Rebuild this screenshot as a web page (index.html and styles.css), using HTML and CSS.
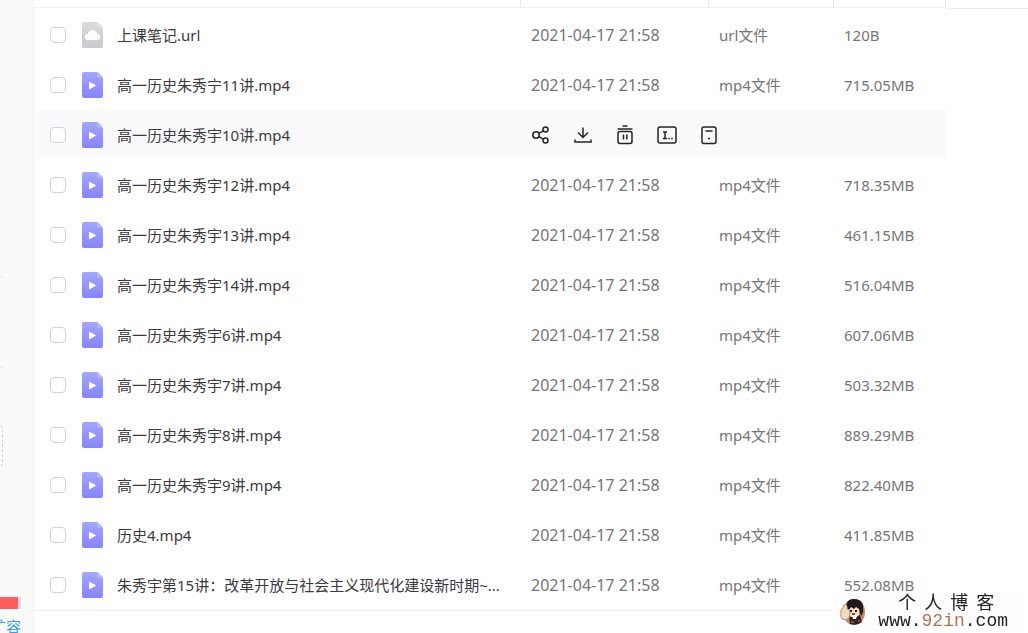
FILE: index.html
```
<!DOCTYPE html>
<html lang="zh-CN">
<head>
  <meta charset="utf-8">
  <title>文件列表</title>
  <link rel="stylesheet" href="styles.css">
</head>
<body>
  <svg class="defs" aria-hidden="true">
    <linearGradient id="violet" x1="0" y1="0" x2="0" y2="1">
      <stop offset="0" stop-color="#a3a6fd"/><stop offset="1" stop-color="#8585fc"/>
    </linearGradient>
    <linearGradient id="grey" x1="0" y1="0" x2="0" y2="1">
      <stop offset="0" stop-color="#dadbdf"/><stop offset="1" stop-color="#c9cacd"/>
    </linearGradient>
    <symbol id="video" viewBox="0 0 21 26">
      <path fill="url(#violet)" d="M2 0h12q1.500 0 2.500 1l3.500 3.500q1 1 1 2.500v17a2 2 0 0 1-2 2H2a2 2 0 0 1-2-2V2a2 2 0 0 1 2-2z"/>
      <path fill="#b4b6fe" d="M15 .3l5.500 5.500h-4a1.500 1.500 0 0 1-1.500-1.500z"/>
      <path fill="#fff" d="M7 10.500q0-1 1-.5l5.500 3q.8.500 0 1l-5.500 3q-1 .5-1-.5z"/>
    </symbol>
    <symbol id="cloud" viewBox="0 0 21 26">
      <path fill="url(#grey)" d="M2 0h12q1.500 0 2.500 1l3.500 3.500q1 1 1 2.500v17a2 2 0 0 1-2 2H2a2 2 0 0 1-2-2V2a2 2 0 0 1 2-2z"/>
      <path fill="#e1e2e6" d="M15 .3l5.500 5.500h-4a1.500 1.500 0 0 1-1.500-1.500z"/>
      <path fill="#fff" d="M6 18a3 3 0 0 1-.2-6 4.800 4.800 0 0 1 9.400 0 3 3 0 0 1-.2 6z"/>
    </symbol>
  </svg>

  <div class="app">
    <aside class="sidebar">
      <div class="rule"></div>
      <div class="rule"></div>
      <div class="dropbox"></div>
      <div class="quota"><div class="used"></div></div>
      <a class="expand" href="#">扩容</a>
    </aside>

    <main class="content">
      <table class="files">
        <colgroup><col><col class="c-time"><col class="c-type"><col class="c-size"></colgroup>
        <thead>
          <tr><th></th><th></th><th></th><th></th></tr>
        </thead>
        <tbody>
          <tr>
            <td><label class="name"><input type="checkbox"><svg class="icon"><use href="#cloud"/></svg><span>上课笔记.url</span></label></td>
            <td class="time">2021-04-17 21:58</td><td>url文件</td><td>120B</td>
          </tr>
          <tr>
            <td><label class="name"><input type="checkbox"><svg class="icon"><use href="#video"/></svg><span>高一历史朱秀宁11讲.mp4</span></label></td>
            <td class="time">2021-04-17 21:58</td><td>mp4文件</td><td>715.05MB</td>
          </tr>
          <tr class="active">
            <td><label class="name"><input type="checkbox"><svg class="icon"><use href="#video"/></svg><span>高一历史朱秀宇10讲.mp4</span></label></td>
            <td colspan="3">
              <div class="actions">
                <button type="button" aria-label="分享"><svg viewBox="0 0 20 20"><circle cx="5" cy="10" r="3.200"/><circle cx="14.500" cy="4.500" r="2.500"/><circle cx="14.500" cy="15.500" r="2.500"/><path d="M7.800 8.400l4.500-2.600M7.800 11.600l4.500 2.600"/></svg></button>
                <button type="button" aria-label="下载"><svg viewBox="0 0 20 20"><path d="M10 2.500v9.500M5 7.500l5 5 5-5M2 14.500v2.500h16v-2.500"/></svg></button>
                <button type="button" aria-label="删除"><svg viewBox="0 0 20 20"><path d="M7.500 1h5M2.500 4h15M8.500 9.500v5M11.800 9.500v5"/><rect x="3" y="6.500" width="14" height="12" rx="2"/></svg></button>
                <button type="button" aria-label="重命名"><svg viewBox="0 0 20 20"><rect x="1" y="2" width="18" height="16" rx="2"/><path d="M6 7h4M8 7v6.500M6 13.500h4M11.300 13.500h1.500M14.200 13.500h1.500"/></svg></button>
                <button type="button" aria-label="更多"><svg viewBox="0 0 20 20"><rect x="3" y="2" width="14" height="16.500" rx="2"/><path d="M6.500 6h7M9 13.500h2"/></svg></button>
              </div>
            </td>
          </tr>
          <tr>
            <td><label class="name"><input type="checkbox"><svg class="icon"><use href="#video"/></svg><span>高一历史朱秀宇12讲.mp4</span></label></td>
            <td class="time">2021-04-17 21:58</td><td>mp4文件</td><td>718.35MB</td>
          </tr>
          <tr>
            <td><label class="name"><input type="checkbox"><svg class="icon"><use href="#video"/></svg><span>高一历史朱秀宇13讲.mp4</span></label></td>
            <td class="time">2021-04-17 21:58</td><td>mp4文件</td><td>461.15MB</td>
          </tr>
          <tr>
            <td><label class="name"><input type="checkbox"><svg class="icon"><use href="#video"/></svg><span>高一历史朱秀宇14讲.mp4</span></label></td>
            <td class="time">2021-04-17 21:58</td><td>mp4文件</td><td>516.04MB</td>
          </tr>
          <tr>
            <td><label class="name"><input type="checkbox"><svg class="icon"><use href="#video"/></svg><span>高一历史朱秀宇6讲.mp4</span></label></td>
            <td class="time">2021-04-17 21:58</td><td>mp4文件</td><td>607.06MB</td>
          </tr>
          <tr>
            <td><label class="name"><input type="checkbox"><svg class="icon"><use href="#video"/></svg><span>高一历史朱秀宇7讲.mp4</span></label></td>
            <td class="time">2021-04-17 21:58</td><td>mp4文件</td><td>503.32MB</td>
          </tr>
          <tr>
            <td><label class="name"><input type="checkbox"><svg class="icon"><use href="#video"/></svg><span>高一历史朱秀宇8讲.mp4</span></label></td>
            <td class="time">2021-04-17 21:58</td><td>mp4文件</td><td>889.29MB</td>
          </tr>
          <tr>
            <td><label class="name"><input type="checkbox"><svg class="icon"><use href="#video"/></svg><span>高一历史朱秀宇9讲.mp4</span></label></td>
            <td class="time">2021-04-17 21:58</td><td>mp4文件</td><td>822.40MB</td>
          </tr>
          <tr>
            <td><label class="name"><input type="checkbox"><svg class="icon"><use href="#video"/></svg><span>历史4.mp4</span></label></td>
            <td class="time">2021-04-17 21:58</td><td>mp4文件</td><td>411.85MB</td>
          </tr>
          <tr>
            <td><label class="name"><input type="checkbox"><svg class="icon"><use href="#video"/></svg><span>朱秀宇第15讲：改革开放与社会主义现代化建设新时期~...</span></label></td>
            <td class="time">2021-04-17 21:58</td><td>mp4文件</td><td>552.08MB</td>
          </tr>
        </tbody>
      </table>
      <div class="detail"></div>
    </main>
  </div>

  <div class="watermark">
    <svg class="avatar" viewBox="0 0 28 28" aria-hidden="true">
      <ellipse cx="15" cy="14" rx="11" ry="13" fill="#b88b62"/>
      <path fill="#f7dfc4" d="M9 7h11v10q-5 5-11 0z"/>
      <path fill="#1f1b1e" d="M8 10Q6 1 15 1t9 8q1 5-2 9l-2-7-3-2-2 2-3-2-2 3z"/>
      <path fill="#2a2527" d="M10 18q6 3 11-1l2 7q-5 4-12 2z"/>
      <path fill="#fff" d="M13 17h5l-1 4h-3z"/>
      <path fill="#222" d="M11 12h2v2h-2zM16 12h2v2h-2z"/>
      <path fill="#f0dcc2" stroke="#b39474" d="M2 14q-1-3 2-4l1-3q2-1 3 1v3q3 0 3 3l-1 6q-3 3-7 1-2-2-1-7z"/>
      <path stroke="#b33c31" stroke-width="2" d="M13 16h3M12 24h3M19 23h2"/>
    </svg>
    <div class="mark">
      <div class="title"><span>个</span><span>人</span><span>博</span><span>客</span></div>
      <div class="site">www.<b>92in</b>.com</div>
    </div>
  </div>
</body>
</html>
```

FILE: styles.css
```
* {
  box-sizing: border-box;
}
body {
  margin: 0;
  background: #fff;
  color: #424246;
  font: 15px/20px "Noto Sans", "Noto Sans CJK SC", sans-serif;
}
.defs {
  position: absolute;
  width: 0;
  height: 0;
}
.app {
  display: flex;
  min-height: 100vh;
}

/* sidebar */
.sidebar {
  display: flex;
  flex-direction: column;
  align-items: flex-start;
  width: 34px;
  padding-top: 276px;
  background: #f9fafc;
  border-right: 1px solid #f0f1f3;
  overflow: hidden;
}
.rule {
  width: 2px;
  height: 1px;
  margin-bottom: 90px;
  background: #e4e5e8;
}
.dropbox {
  width: 16px;
  height: 42px;
  margin: -33px 0 130px -13px;
  border: 1px dashed #d0d1d5;
  border-radius: 4px;
}
.quota {
  width: 21px;
  height: 12px;
  background: #dcdde1;
}
.used {
  width: 18px;
  height: 12px;
  background: #ff5c5c;
}
.expand {
  height: 16px;
  margin: 7px 0 0 -9px;
  color: #3f9cf0;
  text-decoration: none;
  white-space: nowrap;
}

/* file list */
.content {
  display: flex;
  flex: 1;
  align-items: flex-start;
  min-width: 0;
}
.files {
  flex: 1;
  width: 0;
  padding-bottom: 2px;
  table-layout: fixed;
  border-collapse: separate;
  border-spacing: 0;
  border-bottom: 1px solid #ededf0;
}
.c-time {
  width: 188px;
}
.c-type {
  width: 125px;
}
.c-size {
  width: 112px;
}
th {
  height: 8px;
  padding: 0;
  border-right: 1px solid #e8e8eb;
  border-bottom: 1px solid #f2f2f4;
}
td {
  height: 50px;
  padding: 2px 0 0 10px;
  border-top: 2px solid #fff;
  color: #757575;
  white-space: nowrap;
}
.time {
  font-size: 16px;
}
.active td {
  background: #fafafc;
}
.name {
  display: flex;
  align-items: center;
  padding-left: 6px;
  color: #3a3a3e;
}
.name input {
  appearance: none;
  width: 16px;
  height: 16px;
  margin: 0 16px 0 0;
  border: 1px solid #d2d3da;
  border-radius: 4px;
  background: #fff;
}
.icon {
  width: 21px;
  height: 26px;
  margin-right: 14px;
}
.actions {
  display: flex;
  gap: 22px;
}
.actions button {
  padding: 0;
  border: 0;
  background: none;
}
.actions svg {
  display: block;
  width: 20px;
  height: 20px;
  fill: none;
  stroke: #242426;
  stroke-width: 1.5;
}
.detail {
  width: 82px;
  height: 9px;
  border-bottom: 1px solid #ededf0;
}

/* watermark over the list corner */
.watermark {
  position: fixed;
  right: 8px;
  bottom: 3px;
  display: flex;
  align-items: center;
  gap: 11px;
  padding: 0 12px 0 6px;
  background: #fdfdfd;
  color: #222;
}
.avatar {
  width: 28px;
  height: 28px;
}
.title {
  display: flex;
  justify-content: center;
  gap: 8px;
  padding-left: 6px;
  font: 18px/18px "Liberation Serif", "Noto Sans CJK SC", serif;
}
.site {
  font: 18px/18px "Liberation Mono", monospace;
}
.site b {
  color: #b27350;
  font-weight: normal;
}
```
